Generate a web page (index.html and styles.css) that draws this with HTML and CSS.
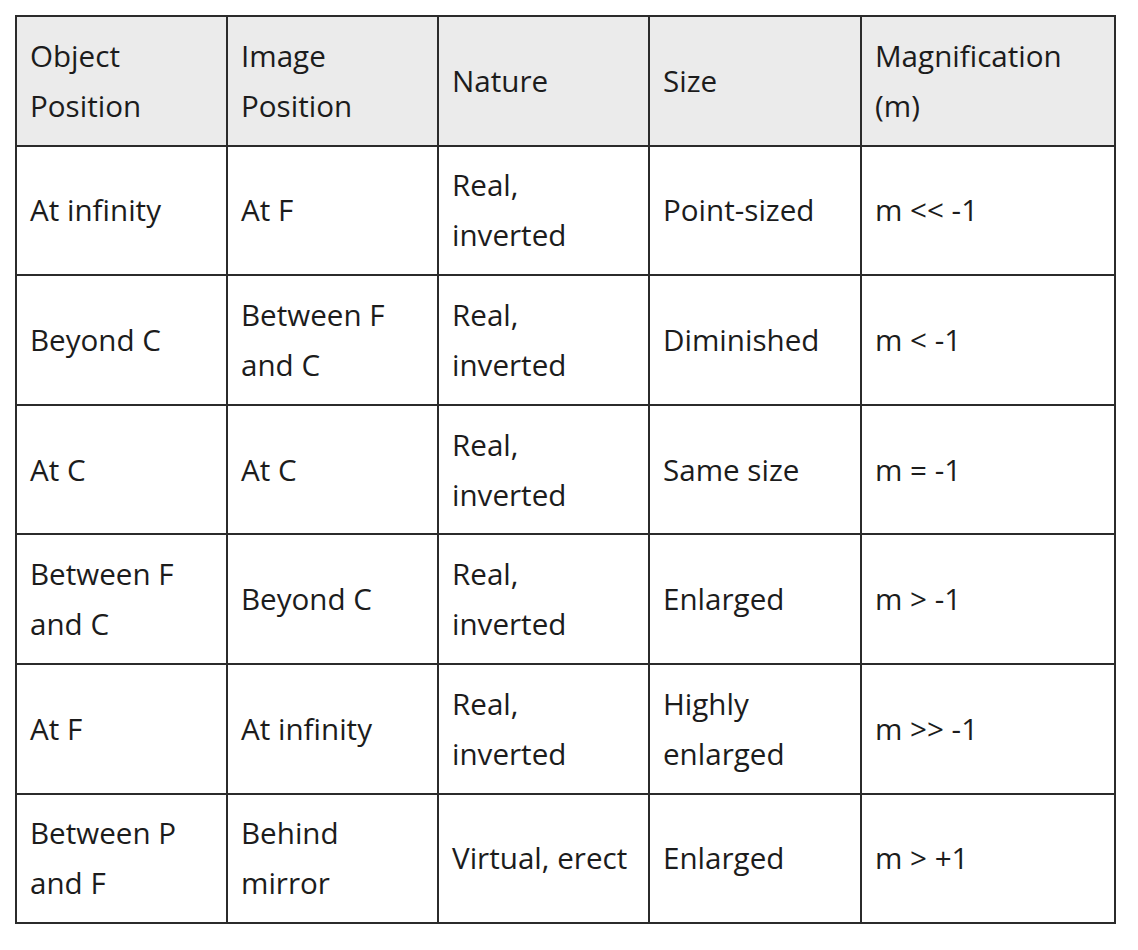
FILE: index.html
```html
<!DOCTYPE html>
<html>
<head>
<meta charset="utf-8">
<link rel="stylesheet" href="styles.css">
</head>
<body>
<table class="mirror">
  <colgroup>
    <col class="c1"><col class="c2"><col class="c3"><col class="c4"><col class="c5">
  </colgroup>
  <thead>
    <tr>
      <th>Object<br>Position</th>
      <th>Image<br>Position</th>
      <th>Nature</th>
      <th>Size</th>
      <th>Magnification<br>(m)</th>
    </tr>
  </thead>
  <tbody>
    <tr><td>At infinity</td><td>At F</td><td>Real,<br>inverted</td><td>Point-sized</td><td>m &lt;&lt; -1</td></tr>
    <tr><td>Beyond C</td><td>Between F<br>and C</td><td>Real,<br>inverted</td><td>Diminished</td><td>m &lt; -1</td></tr>
    <tr><td>At C</td><td>At C</td><td>Real,<br>inverted</td><td>Same size</td><td>m = -1</td></tr>
    <tr><td>Between F<br>and C</td><td>Beyond C</td><td>Real,<br>inverted</td><td>Enlarged</td><td>m &gt; -1</td></tr>
    <tr><td>At F</td><td>At infinity</td><td>Real,<br>inverted</td><td>Highly<br>enlarged</td><td>m &gt;&gt; -1</td></tr>
    <tr><td>Between P<br>and F</td><td>Behind<br>mirror</td><td>Virtual, erect</td><td>Enlarged</td><td>m &gt; +1</td></tr>
  </tbody>
</table>
</body>
</html>
```
FILE: styles.css
```css
html, body {
  margin: 0;
  padding: 0;
  background: #ffffff;
}
body {
  padding: 15px 0 0 15px;
}
.mirror {
  border-collapse: collapse;
  table-layout: fixed;
  width: 1101px;
  font-family: "Open Sans", "Liberation Sans", sans-serif;
  font-size: 29.6px;
  line-height: 50px;
  color: #1c1c1c;
}
.c1, .c2, .c3 { width: 211px; }
.c4 { width: 212px; }
.c5 { width: 254px; }
.mirror th, .mirror td {
  border: 2px solid #2b2b2b;
  padding: 0 0 0 13px;
  height: 129.6px;
  text-align: left;
  vertical-align: middle;
  font-weight: 400;
  box-sizing: border-box;
}
.mirror thead th {
  background: #ebebeb;
}
```
